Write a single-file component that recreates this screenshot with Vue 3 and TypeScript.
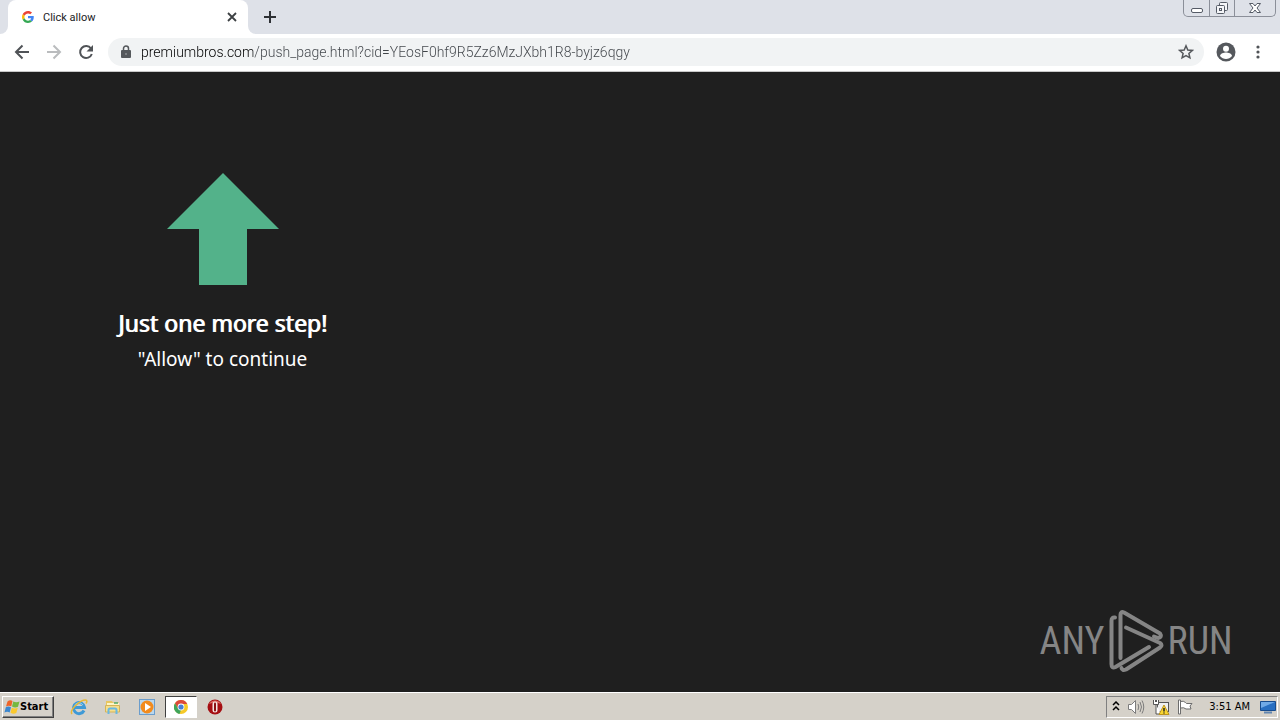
<script setup lang="ts">
import { ref } from 'vue'

const address = ref('premiumbros.com/push_page.html?cid=YEosF0hf9R5Zz6MzJXbh1R8-byjz6qgy')
const tabTitle = ref('Click allow')
</script>

<template>
  <div class="desktop">
    <header class="tabstrip">
      <div class="lead"></div>
      <div class="tab">
        <svg class="favicon" viewBox="0 0 48 48" aria-hidden="true">
          <path fill="#ea4335" d="M24 9.500c3.500 0 6.700 1.200 9.200 3.600l6.900-6.900C35.900 2.400 30.500 0 24 0 14.600 0 6.500 5.400 2.600 13.200l8 6.200C12.400 13.700 17.700 9.500 24 9.500z" />
          <path fill="#4285f4" d="M47 24.500c0-1.600-.2-3.100-.4-4.500H24v9h12.900c-.6 3-2.200 5.500-4.700 7.200l7.700 6C44.400 38 47 31.800 47 24.500z" />
          <path fill="#fbbc05" d="M10.500 28.600A14.500 14.500 0 0 1 9.800 24c0-1.600.3-3.100.8-4.600l-8-6.200A24 24 0 0 0 0 24c0 3.900.9 7.500 2.600 10.800z" />
          <path fill="#34a853" d="M24 48c6.500 0 11.900-2.100 15.900-5.800l-7.700-6c-2.200 1.500-4.900 2.300-8.200 2.300-6.300 0-11.600-4.200-13.500-9.900l-7.900 6.200C6.500 42.600 14.600 48 24 48z" />
        </svg>
        <span class="title">{{ tabTitle }}</span>
        <button class="bare close" aria-label="Close tab">
          <svg width="10" height="10" viewBox="0 0 10 10"><path d="M1 1l8 8M9 1L1 9" stroke="#3c4043" stroke-width="1.800" /></svg>
        </button>
      </div>
      <div class="rest">
        <button class="bare plus" aria-label="New tab">
          <svg width="12" height="12" viewBox="0 0 12 12"><path d="M6 0v12M0 6h12" stroke="#2e3135" stroke-width="2" /></svg>
        </button>
        <div class="winbtns">
          <button class="bare wb" aria-label="Minimize">
            <svg width="14" height="16" viewBox="0 0 14 16"><rect x="1.500" y="8.500" width="11" height="4" rx="1.500" fill="#fff" stroke="#555b66" /></svg>
          </button>
          <button class="bare wb" aria-label="Restore">
            <svg width="14" height="16" viewBox="0 0 14 16" fill="#f4f5f8" stroke="#555b66"><rect x="4.500" y="2.500" width="8" height="8" rx="1" /><rect x="1.500" y="5.500" width="8" height="8" rx="1" /><rect x="4.500" y="8.500" width="2" height="2" /></svg>
          </button>
          <button class="bare wb wide" aria-label="Close window">
            <svg width="14" height="16" viewBox="0 0 14 16"><path d="M1.500 3.500h3.500l2 2.500 2-2.500h3.500l-3.500 4.500 3.500 4.500H9l-2-2.500-2 2.500H1.500L5 8z" fill="#fff" stroke="#555b66" /></svg>
          </button>
        </div>
      </div>
    </header>

    <nav class="toolbar">
      <button class="bare nav" aria-label="Back"><svg width="16" height="16" viewBox="0 0 16 16"><path d="M15 8H2.500M8.500 1.500L2 8l6.500 6.500" fill="none" stroke="#505357" stroke-width="2" /></svg></button>
      <button class="bare nav" aria-label="Forward"><svg width="16" height="16" viewBox="0 0 16 16"><path d="M1 8h12.500M7.500 1.500L14 8l-6.500 6.500" fill="none" stroke="#babcbe" stroke-width="2" /></svg></button>
      <button class="bare nav" aria-label="Reload"><svg width="16" height="16" viewBox="0 0 16 16"><path d="M13 4.500A6 6 0 1 0 13.800 10" fill="none" stroke="#505357" stroke-width="2" /><path d="M15 1v6.500H8.500z" fill="#505357" /></svg></button>
      <div class="omnibox">
        <svg width="10" height="14" viewBox="0 0 10 14" aria-hidden="true"><rect y="5" width="10" height="8" rx="1" fill="#55585c" /><path d="M2.500 5.500V3.500a2.500 2.500 0 0 1 5 0v2" fill="none" stroke="#55585c" stroke-width="1.500" /><circle cx="5" cy="9" r="1" fill="#8b8e91" /></svg>
        <input v-model="address" class="url" type="text" aria-label="Address" spellcheck="false" />
        <button class="bare star" aria-label="Bookmark this page"><svg width="16" height="16" viewBox="0 0 16 16"><path d="M8 1.800l1.800 4.200 4.500.4-3.400 3 1 4.400L8 11.500l-3.900 2.300 1-4.400-3.400-3 4.500-.4z" fill="none" stroke="#55585c" stroke-width="1.500" /></svg></button>
      </div>
      <button class="bare profile" aria-label="Profile"><svg width="20" height="20" viewBox="0 0 20 20"><circle cx="10" cy="10" r="9.500" fill="#55585d" /><circle cx="10" cy="6.800" r="3" fill="#fff" /><path d="M4 14c0-2.500 4-3.500 6-3.500s6 1 6 3.500c-1.500 2-3.700 3-6 3s-4.500-1-6-3z" fill="#fff" /></svg></button>
      <button class="bare more" aria-label="Menu"><svg width="4" height="16" viewBox="0 0 4 16" fill="#505357"><circle cx="2" cy="3" r="1.600" /><circle cx="2" cy="8" r="1.600" /><circle cx="2" cy="13" r="1.600" /></svg></button>
    </nav>

    <main class="page">
      <section class="prompt">
        <svg class="arrow" width="112" height="112" viewBox="0 0 112 112" aria-hidden="true"><path d="M56 0l56 56H80v56H32V56H0z" fill="#53b28a" /></svg>
        <h1>Just one more step!</h1>
        <p>"Allow" to continue</p>
      </section>
      <div class="brand">
        <span>ANY</span>
        <svg width="56" height="64" viewBox="0 0 56 64" fill="none" stroke="#858585" stroke-width="4" stroke-linecap="round" stroke-linejoin="round" aria-hidden="true">
          <path d="M7 8.500Q3.500 8 3.500 12V55Q3.500 60 7.500 58L41 38" />
          <path d="M12.500 49V6Q12.500 2 16 3.500L52 24.500Q54.500 28 50 29L46 27.500" />
          <path d="M18 18.500L52 34Q55 36 52 38.500L18 60.500Q14 62 13.500 59" />
        </svg>
        <span>RUN</span>
      </div>
    </main>

    <footer class="taskbar">
      <button class="start">
        <svg width="16" height="16" viewBox="0 0 16 16" aria-hidden="true">
          <path d="M3.500 2.500Q6 .5 8.500 2L7.300 7.300Q4.500 6 2 7.500z" fill="#ee6428" />
          <path d="M9.300 2.500q3 1.500 6.200 0l-1.500 5.300q-3 1.500-6-.3z" fill="#76b83f" />
          <path d="M1.800 8.300q2.500-1.500 5.200 0L5.700 13.500q-2.500-1.500-5.200 0z" fill="#3b87cf" />
          <path d="M7.800 8.800q3 1.500 6 0l-1.500 5.200q-3 1.500-5.800-.3z" fill="#fac92e" />
        </svg>
        <span>Start</span>
      </button>
      <div class="quick">
        <button class="bare app" aria-label="Internet Explorer">
          <svg width="18" height="18" viewBox="0 0 18 18" fill="none"><path d="M14 12.500A5.500 5.500 0 1 1 14.500 9.500H5" stroke="#3f9ad6" stroke-width="3" /><path d="M4.500 7.500A5 5 0 0 1 13 7" stroke="#8ed2f4" /><path d="M2 16C-1 12 10 2 15.500 2c2 0 1.500 2 .5 3.500" stroke="#e8b936" stroke-width="1.500" /></svg>
        </button>
        <button class="bare app" aria-label="File Explorer">
          <svg width="18" height="18" viewBox="0 0 18 18"><path d="M2 3h6l1 1.500h6V14H2z" fill="#e8c65f" /><path d="M3 5h12v4H3z" fill="#fdf5c6" /><path d="M1.500 7.500h14V14h-14z" fill="#f6df8d" stroke="#d5b458" /><path d="M4.500 16v-4q0-1.500 1.500-1.500h5q1.500 0 1.500 1.500v4" fill="none" stroke="#69b8e2" stroke-width="2" /><path d="M10 5h4" stroke="#52aa6c" stroke-width="1.500" /></svg>
        </button>
        <button class="bare app" aria-label="Media Player">
          <svg width="18" height="18" viewBox="0 0 18 18"><rect x="1.500" y="1.500" width="15" height="15" fill="#b9d7ee" stroke="#6b9dcc" /><circle cx="9" cy="9" r="6.500" fill="#f28b1d" /><path d="M7 5l6 4-6 4z" fill="#fff" /></svg>
        </button>
        <button class="bare app active" aria-label="Chrome">
          <svg width="14" height="14" viewBox="0 0 14 14"><circle cx="7" cy="7" r="7" fill="#f6c927" /><path d="M1 3.300A7 7 0 0 1 13.200 4H7L4 8.500z" fill="#dc493a" /><path d="M1 3.300L4 8.600 7 10l-1.500 4A7 7 0 0 1 1 3.300z" fill="#3fa45a" /><circle cx="7" cy="7" r="3.400" fill="#fff" /><circle cx="7" cy="7" r="2.600" fill="#477fd6" /></svg>
        </button>
        <button class="bare app" aria-label="Opera">
          <svg width="16" height="16" viewBox="0 0 16 16"><circle cx="8" cy="8" r="7.500" fill="#a50e12" /><path d="M2 5a7 7 0 0 1 12 0q-6-3-12 0z" fill="#de6a62" /><rect x="5.500" y="2.500" width="5" height="11" rx="2.500" fill="#f5e6e3" /><rect x="7" y="3.500" width="2" height="9" rx="1" fill="#8a1012" /></svg>
        </button>
      </div>
      <div class="tray">
        <button class="bare" aria-label="Show hidden icons"><svg width="8" height="12" viewBox="0 0 8 12"><path d="M1 4l3-3 3 3M1 9l3-3 3 3" fill="none" stroke="#000" stroke-width="1.500" /></svg></button>
        <button class="bare" aria-label="Volume"><svg width="18" height="16" viewBox="0 0 18 16" fill="#fff" stroke="#7c7c7c"><path d="M1.500 5.500h3l4-4v13l-4-4h-3z" /><path d="M11 5q1.500 3 0 6M13 3q3 5 0 10M15 1.500q3.500 6.500 0 13" fill="none" /></svg></button>
        <button class="bare" aria-label="Network"><svg width="18" height="18" viewBox="0 0 18 18"><rect x="5.500" y="4.500" width="11" height="9" fill="#efefef" stroke="#555" /><path d="M1.500 2v4.500h5V2M4 6.500V16h5M3.500 2v2M4.500 2v2" fill="#fff" stroke="#555" /><path d="M12 7l5 9.500H7z" fill="#f9d62f" stroke="#bd941e" /><path d="M12 10v3.500M12 14.500v1" stroke="#222" stroke-width="1.500" /></svg></button>
        <button class="bare" aria-label="Action Center"><svg width="16" height="16" viewBox="0 0 16 16" fill="#fff" stroke="#6d6d6d"><path d="M3.500 2.500q3-1 5 1l1 1h5.500l-2 2.500 1 3h-5q-2-2-5.500-1z" /><path d="M1.500 1h2v14h-2z" /></svg></button>
        <time>3:51 AM</time>
        <button class="bare" aria-label="Show desktop"><svg width="16" height="14" viewBox="0 0 16 14"><path d="M.5 1.500h15v9H.5z" fill="#286fc1" stroke="#174c8e" /><path d="M1 2h14L1 8z" fill="#70aae7" /><path d="M4 12.500h8" stroke="#6286b0" stroke-width="2" /></svg></button>
      </div>
    </footer>
  </div>
</template>

<style>
html,
body,
#app {
  height: 100%;
}
</style>

<style scoped>
.desktop {
  display: flex;
  flex-direction: column;
  min-height: 100%;
  background: #1f1f1f;
  font-family: "DejaVu Sans Condensed", "DejaVu Sans", sans-serif;
  color: #202124;
}
.bare {
  display: flex;
  align-items: center;
  justify-content: center;
  padding: 0;
  border: 0;
  background: none;
}
.tabstrip {
  display: flex;
  height: 34px;
  background: #fff;
}
.lead {
  width: 8px;
  background: #dee1e8;
  border-bottom-right-radius: 8px;
}
.tab {
  box-sizing: border-box;
  display: flex;
  align-items: center;
  width: 240px;
  padding: 0 10px 0 14px;
  background: #fff;
  border-radius: 8px 8px 0 0;
  box-shadow: 0 -8px 0 #dee1e8;
}
.favicon {
  width: 12px;
  height: 12px;
}
.title {
  flex: 1;
  margin-left: 9px;
  font: 11px Roboto, sans-serif;
}
.close {
  width: 12px;
  height: 16px;
}
.rest {
  flex: 1;
  display: flex;
  align-items: flex-start;
  justify-content: space-between;
  background: #dee1e8;
  border-bottom-left-radius: 8px;
}
.plus {
  width: 28px;
  height: 34px;
  margin-left: 8px;
}
.winbtns {
  display: flex;
  border: 1px solid #8b8f99;
  border-top: 0;
  border-radius: 0 0 5px 5px;
  margin-right: 4px;
}
.wb {
  width: 25px;
  height: 16px;
}
.wb + .wb {
  border-left: 1px solid #8b8f99;
}
.wide {
  width: 41px;
}
.toolbar {
  box-sizing: border-box;
  display: flex;
  align-items: center;
  height: 38px;
  padding: 0 10px 2px 6px;
  background: #fff;
  border-bottom: 1px solid #c8c8c8;
}
.nav {
  width: 32px;
  height: 28px;
}
.omnibox {
  flex: 1;
  display: flex;
  align-items: center;
  height: 28px;
  margin-left: 6px;
  padding: 0 10px 0 13px;
  border-radius: 14px;
  background: #f1f3f4;
}
.url {
  flex: 1;
  min-width: 0;
  height: 22px;
  margin-left: 10px;
  padding: 0;
  border: 0;
  outline: 0;
  font: 300 14px Roboto, sans-serif;
  color: transparent;
  caret-color: #202124;
  background: linear-gradient(to right, #000 112px, #404449 112px);
  background-clip: text;
}
.profile {
  width: 28px;
  height: 28px;
  margin-left: 8px;
}
.more {
  width: 24px;
  height: 28px;
  margin-left: 6px;
}
.page {
  flex: 1;
  display: flex;
  flex-direction: column;
  justify-content: space-between;
  padding: 101px 48px 19px 0;
}
.prompt {
  display: flex;
  flex-direction: column;
  align-items: center;
  width: 445px;
  color: #fff;
  font-family: "Noto Sans", sans-serif;
}
h1 {
  margin: 21px 0 0;
  font-size: 23px;
  line-height: 34px;
  font-weight: 400;
  text-shadow: 1px 0 #fff;
}
p {
  margin: 5px 0 0;
  font-size: 19px;
  line-height: 28px;
}
.brand {
  align-self: flex-end;
  display: grid;
  grid-template-columns: 64px 56px 64px;
  gap: 4px;
  align-items: center;
  justify-items: center;
  color: #858585;
  font: 400 38px/40px "Roboto Condensed", "Liberation Sans", sans-serif;
}
.taskbar {
  box-sizing: border-box;
  display: flex;
  align-items: center;
  height: 28px;
  padding: 1px 2px;
  background: #d5d1c9;
  border-top: 1px solid #fff;
}
.start {
  display: flex;
  align-items: center;
  box-sizing: border-box;
  width: 52px;
  height: 22px;
  padding: 0 1px;
  border: 1px solid;
  border-color: #fff #404040 #404040 #fff;
  box-shadow: inset -1px -1px #808080;
  background: #d5d1c9;
  color: #000;
  font: bold 11px "DejaVu Sans Condensed", sans-serif;
}
.quick {
  display: flex;
  align-items: center;
  gap: 2px;
  margin-left: 9px;
}
.app {
  box-sizing: border-box;
  width: 32px;
  height: 22px;
}
.active {
  background: #fff;
  border: 1px solid;
  border-color: #404040 #fff #fff #404040;
}
.tray {
  display: flex;
  align-items: center;
  box-sizing: border-box;
  height: 22px;
  margin-left: auto;
  padding: 0 1px 0 5px;
  gap: 7px;
  border: 1px solid;
  border-color: #808080 #fff #fff #808080;
}
time {
  margin: 0 3px 0 9px;
  color: #000;
  font-size: 11px;
}
</style>
